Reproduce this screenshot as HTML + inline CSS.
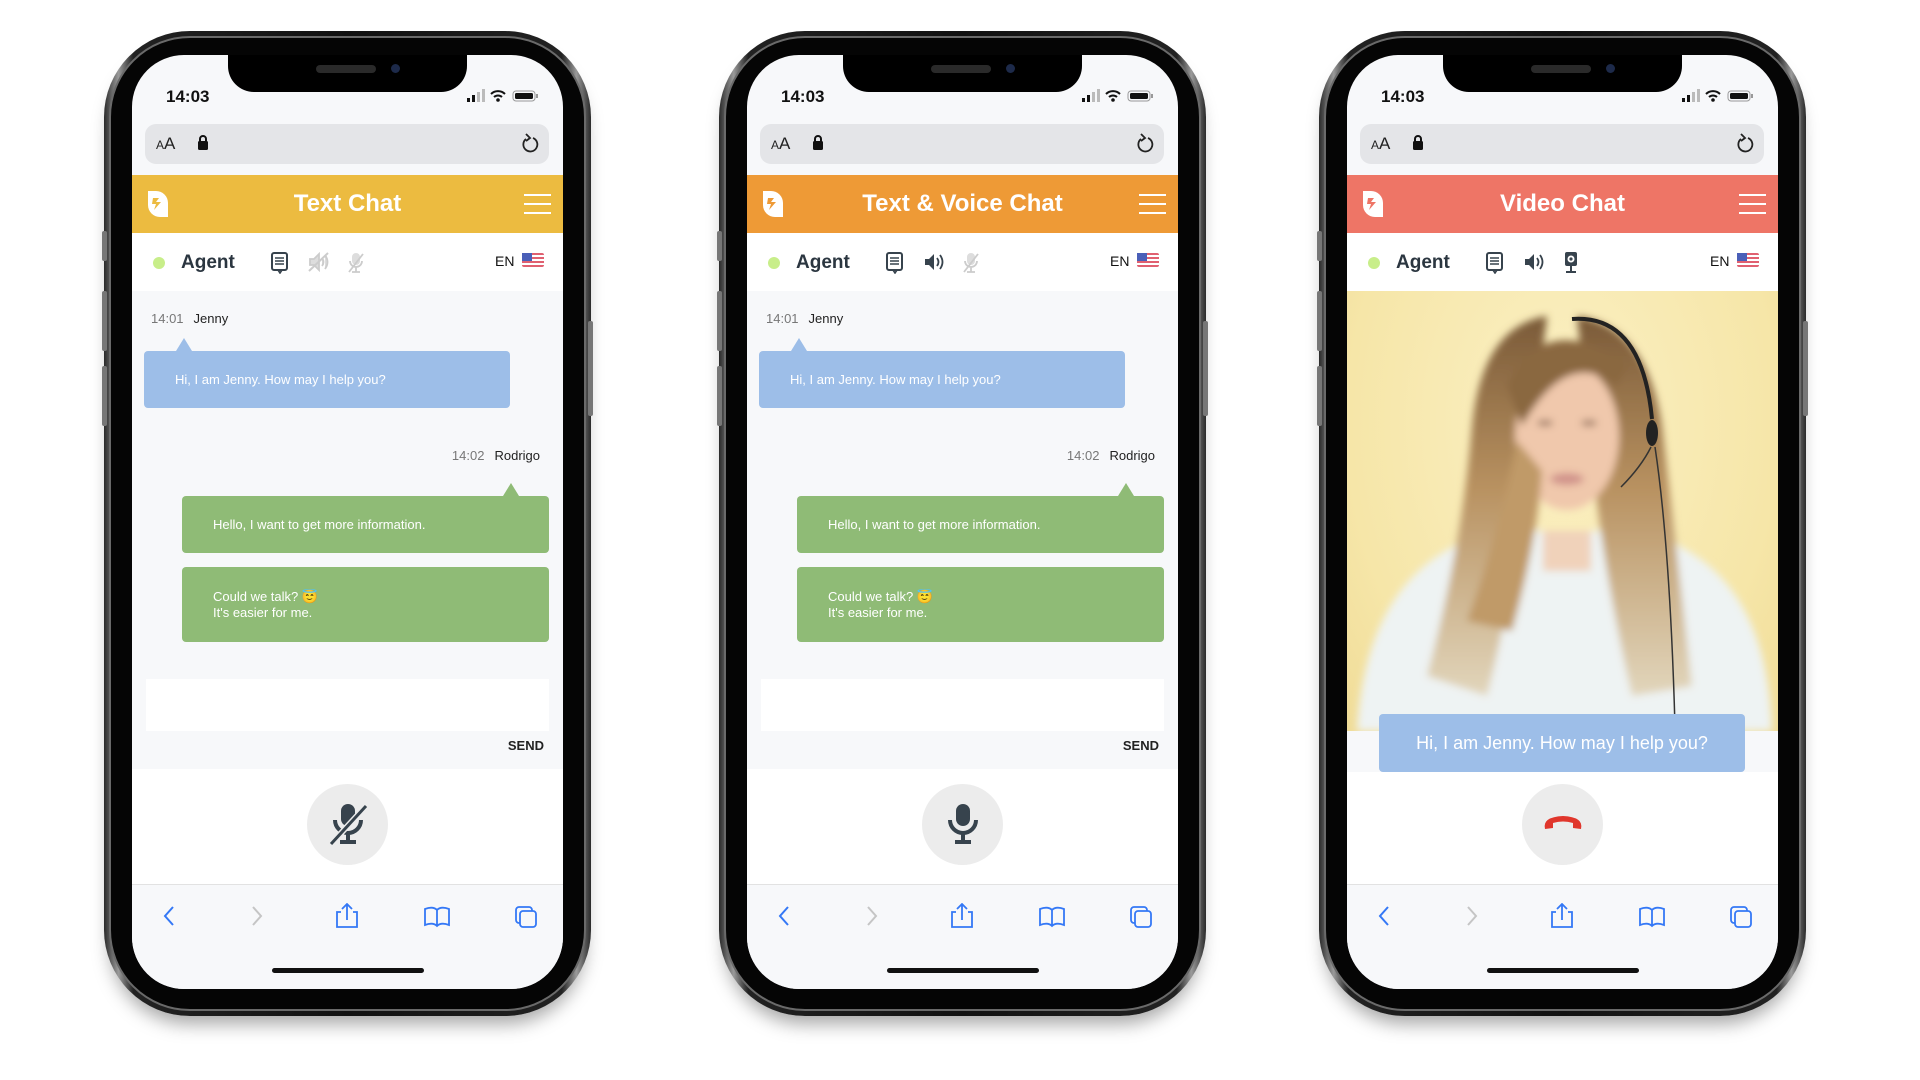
<!DOCTYPE html>
<html><head><meta charset="utf-8">
<style>
*{margin:0;padding:0;box-sizing:border-box}
body{width:1920px;height:1080px;background:#fff;position:relative;overflow:hidden;font-family:"Liberation Sans",Arial,sans-serif}
.phone{position:absolute;top:31px;width:487px;height:985px;border-radius:86px;background:linear-gradient(90deg,#2a2a2a,#9a9a9a 3%,#222 6%,#111 50%,#222 94%,#9a9a9a 97%,#2a2a2a);box-shadow:0 14px 18px -6px rgba(0,0,0,.35)}
.phone:before{content:"";position:absolute;left:5px;top:5px;right:5px;bottom:5px;border-radius:81px;background:#050505;border:2px solid #6a6a6a}
.btn{position:absolute;width:5px;background:#777;border-radius:2px}
.screen{position:absolute;left:28px;top:24px;width:431px;height:934px;border-radius:52px;overflow:hidden;background:#f7f8fa}
.notch{position:absolute;left:96px;top:-2px;width:239px;height:39px;background:#000;border-radius:0 0 26px 26px}
.notch i{position:absolute;left:88px;top:12px;width:60px;height:8px;border-radius:4px;background:#2a2a2a}
.notch b{position:absolute;left:163px;top:11px;width:9px;height:9px;border-radius:50%;background:#1d2a4a}
.time{position:absolute;left:34px;top:32px;font-size:17px;font-weight:bold;color:#111}
.stat{position:absolute;right:22px;top:34px}
.url{position:absolute;left:13px;top:69px;width:404px;height:40px;background:#e4e5e8;border-radius:11px}
.url .aa{position:absolute;left:11px;top:10px;font-size:17px;color:#222}
.url .aa small{font-size:12px}
.head{position:absolute;left:0;top:120px;width:431px;height:58px}
.head .t{position:absolute;left:0;right:0;top:15px;text-align:center;color:#fff;font-weight:bold;font-size:24px}
.ham{position:absolute;right:12px;top:19px;width:27px;height:20px;border-top:2px solid #fff;border-bottom:2px solid #fff}
.ham:after{content:"";position:absolute;left:0;right:0;top:7px;height:2px;background:#fff}
.agent{position:absolute;left:0;top:178px;width:431px;height:58px;background:#fff}
.dot{position:absolute;left:21px;top:24px;width:12px;height:12px;border-radius:50%;background:#c8ee8a}
.agent .n{position:absolute;left:49px;top:19px;font-size:19px;font-weight:bold;color:#2b3640}
.agent .en{position:absolute;left:363px;top:20px;font-size:14px;color:#111}
.flag{position:absolute;left:390px;top:20px;width:22px;height:14px;border-radius:2px;background:repeating-linear-gradient(#e06070 0 2px,#fff 2px 4px)}
.flag:before{content:"";position:absolute;left:0;top:0;width:10px;height:8px;background:#4a5fb8}
.ic{position:absolute;top:19px}
.meta{position:absolute;font-size:13px;color:#222}
.meta span{color:#777;margin-right:10px}
.bub{position:absolute;color:#fff;font-size:13px;border-radius:4px;padding:0 31px;display:flex;flex-direction:column;justify-content:center;line-height:16px}
.blue{background:#9dbee8}
.green{background:#8fbb76}
.tail{position:absolute;width:0;height:0;border-left:8px solid transparent;border-right:8px solid transparent}
.inp{position:absolute;left:14px;top:624px;width:403px;height:52px;background:#fff}
.send{position:absolute;right:19px;top:683px;font-size:13px;font-weight:bold;color:#222}
.low{position:absolute;left:0;top:714px;width:431px;height:115px;background:#fff}
.circ{position:absolute;left:175px;top:15px;width:81px;height:81px;border-radius:50%;background:#ececec}
.tool{position:absolute;left:0;top:829px;width:431px;height:105px;background:#f7f8fa;border-top:1px solid #e2e2e2}
.home{position:absolute;left:140px;top:83px;width:152px;height:5px;border-radius:3px;background:#111}
</style></head><body>

<div class="phone" style="left:104px">
<div class="btn" style="left:-2px;top:200px;height:30px"></div><div class="btn" style="left:-2px;top:260px;height:60px"></div><div class="btn" style="left:-2px;top:335px;height:60px"></div><div class="btn" style="right:-2px;top:290px;height:95px"></div>
<div class="screen">
<div class="time">14:03</div>
<svg class="stat" width="74" height="14" viewBox="0 0 74 14"><rect x="0" y="9" width="3" height="4" fill="#111"/><rect x="5" y="6" width="3" height="7" fill="#111"/><rect x="10" y="3" width="3" height="10" fill="#bbb"/><rect x="15" y="0" width="3" height="13" fill="#bbb"/><path d="M24 5a10 10 0 0 1 14 0M27 8a6 6 0 0 1 8 0" stroke="#111" stroke-width="2" fill="none"/><circle cx="31" cy="11" r="1.8" fill="#111"/><rect x="46" y="2" width="22" height="10" rx="3" fill="none" stroke="#999"/><rect x="48" y="4" width="18" height="6" rx="1.5" fill="#111"/><rect x="69" y="5" width="2" height="4" fill="#999"/></svg>
<div class="url"><div class="aa"><small>A</small>A</div>
<svg style="position:absolute;left:52px;top:11px" width="12" height="15"><rect x="1" y="6" width="10" height="9" rx="1.5" fill="#111"/><path d="M3 7V4a3 3 0 0 1 6 0v3" stroke="#111" stroke-width="2" fill="none"/></svg>
<svg style="position:absolute;right:10px;top:9px" width="20" height="22"><path d="M14 5a7 7 0 1 1-7 1" stroke="#222" stroke-width="1.8" fill="none"/><path d="M7 1l4 4-4 3" stroke="#222" stroke-width="1.8" fill="none"/></svg></div>
<div class="head" style="background:#ecbb40"><svg style="position:absolute;left:14px;top:14px" width="24" height="30" viewBox="0 0 24 30"><path d="M2 2h8a12 12 0 0 1 12 12v14h-8A12 12 0 0 1 2 16z" fill="#fff"/><path d="M7 9h6l-3 4h5l-7 8 2-6H6z" fill="#ecbb40"/></svg><div class="t">Text Chat</div><div class="ham"></div></div>
<div class="agent"><div class="dot"></div><div class="n">Agent</div>
<svg class="ic" style="left:139px" width="18" height="22"><rect x="1" y="1" width="15" height="17" rx="2" stroke="#37434d" stroke-width="2" fill="none"/><path d="M4 6h9M4 9h9M4 12h9M7 18l2 3 2-3" stroke="#37434d" stroke-width="1.6" fill="none"/></svg>
<svg class="ic" style="left:176px" width="22" height="20"><path d="M2 7h4l5-5v16l-5-5H2z M14 6q3 4 0 8M17 3q5 7 0 14" stroke="#ccc" stroke-width="1.8" fill="#ddd"/><path d="M1 19L20 1" stroke="#ccc" stroke-width="2"/></svg>
<svg class="ic" style="left:215px" width="18" height="22"><rect x="5" y="1" width="8" height="12" rx="4" fill="#ddd"/><path d="M3 9a6 6 0 0 0 12 0M9 15v5M5 20h8M2 20L16 2" stroke="#ccc" stroke-width="1.8" fill="none"/></svg>
<div class="en">EN</div><div class="flag"></div></div>
<div class="meta" style="left:19px;top:256px"><span>14:01</span>Jenny</div>
<div class="tail" style="left:44px;top:283px;border-bottom:13px solid #9dbee8"></div>
<div class="bub blue" style="left:12px;top:296px;width:366px;height:57px">Hi, I am Jenny. How may I help you?</div>
<div class="meta" style="right:23px;top:393px"><span>14:02</span>Rodrigo</div>
<div class="tail" style="left:371px;top:428px;border-bottom:13px solid #8fbb76"></div>
<div class="bub green" style="left:50px;top:441px;width:367px;height:57px">Hello, I want to get more information.</div>
<div class="bub green" style="left:50px;top:512px;width:367px;height:75px">Could we talk? 😇<br>It's easier for me.</div>
<div class="inp"></div><div class="send">SEND</div>
<div class="low"><div class="circ"><svg style="position:absolute;left:19px;top:16px" width="44" height="48"><rect x="15" y="4" width="14" height="22" rx="7" fill="#37434d"/><path d="M9 20a13 13 0 0 0 26 0M22 33v8M14 42h16" stroke="#37434d" stroke-width="4" fill="none"/><path d="M5 44L40 6" stroke="#ececec" stroke-width="6"/><path d="M5 44L40 6" stroke="#37434d" stroke-width="3"/></svg></div></div>
<div class="tool">
<svg style="position:absolute;left:24px;top:18px" width="400" height="28" viewBox="0 0 400 28"><path d="M17 4l-8 9 8 9" stroke="#3478f6" stroke-width="2" fill="none"/><path d="M97 4l8 9-8 9" stroke="#c5c5c5" stroke-width="2" fill="none"/><path d="M185 9h-4v15h20V9h-4M191 17V2M186 6l5-5 5 5" stroke="#3478f6" stroke-width="1.8" fill="none"/><path d="M269 6q8-3 12 1q4-4 12-1v16q-8-3-12 1q-4-4-12-1zM281 7v16" stroke="#3478f6" stroke-width="1.8" fill="none"/><rect x="360" y="4" width="16" height="16" rx="3" stroke="#3478f6" stroke-width="1.8" fill="none"/><rect x="364" y="8" width="16" height="16" rx="3" stroke="#3478f6" stroke-width="1.8" fill="#f7f8fa"/></svg>
<div class="home"></div></div>
<div class="notch"><i></i><b></b></div>
</div></div>

<div class="phone" style="left:719px">
<div class="btn" style="left:-2px;top:200px;height:30px"></div><div class="btn" style="left:-2px;top:260px;height:60px"></div><div class="btn" style="left:-2px;top:335px;height:60px"></div><div class="btn" style="right:-2px;top:290px;height:95px"></div>
<div class="screen">
<div class="time">14:03</div>
<svg class="stat" width="74" height="14" viewBox="0 0 74 14"><rect x="0" y="9" width="3" height="4" fill="#111"/><rect x="5" y="6" width="3" height="7" fill="#111"/><rect x="10" y="3" width="3" height="10" fill="#bbb"/><rect x="15" y="0" width="3" height="13" fill="#bbb"/><path d="M24 5a10 10 0 0 1 14 0M27 8a6 6 0 0 1 8 0" stroke="#111" stroke-width="2" fill="none"/><circle cx="31" cy="11" r="1.8" fill="#111"/><rect x="46" y="2" width="22" height="10" rx="3" fill="none" stroke="#999"/><rect x="48" y="4" width="18" height="6" rx="1.5" fill="#111"/><rect x="69" y="5" width="2" height="4" fill="#999"/></svg>
<div class="url"><div class="aa"><small>A</small>A</div>
<svg style="position:absolute;left:52px;top:11px" width="12" height="15"><rect x="1" y="6" width="10" height="9" rx="1.5" fill="#111"/><path d="M3 7V4a3 3 0 0 1 6 0v3" stroke="#111" stroke-width="2" fill="none"/></svg>
<svg style="position:absolute;right:10px;top:9px" width="20" height="22"><path d="M14 5a7 7 0 1 1-7 1" stroke="#222" stroke-width="1.8" fill="none"/><path d="M7 1l4 4-4 3" stroke="#222" stroke-width="1.8" fill="none"/></svg></div>
<div class="head" style="background:#ee9a36"><svg style="position:absolute;left:14px;top:14px" width="24" height="30" viewBox="0 0 24 30"><path d="M2 2h8a12 12 0 0 1 12 12v14h-8A12 12 0 0 1 2 16z" fill="#fff"/><path d="M7 9h6l-3 4h5l-7 8 2-6H6z" fill="#ee9a36"/></svg><div class="t">Text &amp; Voice Chat</div><div class="ham"></div></div>
<div class="agent"><div class="dot"></div><div class="n">Agent</div>
<svg class="ic" style="left:139px" width="18" height="22"><rect x="1" y="1" width="15" height="17" rx="2" stroke="#37434d" stroke-width="2" fill="none"/><path d="M4 6h9M4 9h9M4 12h9M7 18l2 3 2-3" stroke="#37434d" stroke-width="1.6" fill="none"/></svg>
<svg class="ic" style="left:176px" width="22" height="20"><path d="M2 7h4l5-5v16l-5-5H2z" fill="#37434d"/><path d="M14 6q3 4 0 8M17 3q5 7 0 14" stroke="#37434d" stroke-width="1.8" fill="none"/></svg>
<svg class="ic" style="left:215px" width="18" height="22"><rect x="5" y="1" width="8" height="12" rx="4" fill="#ddd"/><path d="M3 9a6 6 0 0 0 12 0M9 15v5M5 20h8M2 20L16 2" stroke="#ccc" stroke-width="1.8" fill="none"/></svg>
<div class="en">EN</div><div class="flag"></div></div>
<div class="meta" style="left:19px;top:256px"><span>14:01</span>Jenny</div>
<div class="tail" style="left:44px;top:283px;border-bottom:13px solid #9dbee8"></div>
<div class="bub blue" style="left:12px;top:296px;width:366px;height:57px">Hi, I am Jenny. How may I help you?</div>
<div class="meta" style="right:23px;top:393px"><span>14:02</span>Rodrigo</div>
<div class="tail" style="left:371px;top:428px;border-bottom:13px solid #8fbb76"></div>
<div class="bub green" style="left:50px;top:441px;width:367px;height:57px">Hello, I want to get more information.</div>
<div class="bub green" style="left:50px;top:512px;width:367px;height:75px">Could we talk? 😇<br>It's easier for me.</div>
<div class="inp"></div><div class="send">SEND</div>
<div class="low"><div class="circ"><svg style="position:absolute;left:19px;top:16px" width="44" height="48"><rect x="15" y="4" width="14" height="22" rx="7" fill="#37434d"/><path d="M9 20a13 13 0 0 0 26 0M22 33v8M14 42h16" stroke="#37434d" stroke-width="4" fill="none"/></svg></div></div>
<div class="tool">
<svg style="position:absolute;left:24px;top:18px" width="400" height="28" viewBox="0 0 400 28"><path d="M17 4l-8 9 8 9" stroke="#3478f6" stroke-width="2" fill="none"/><path d="M97 4l8 9-8 9" stroke="#c5c5c5" stroke-width="2" fill="none"/><path d="M185 9h-4v15h20V9h-4M191 17V2M186 6l5-5 5 5" stroke="#3478f6" stroke-width="1.8" fill="none"/><path d="M269 6q8-3 12 1q4-4 12-1v16q-8-3-12 1q-4-4-12-1zM281 7v16" stroke="#3478f6" stroke-width="1.8" fill="none"/><rect x="360" y="4" width="16" height="16" rx="3" stroke="#3478f6" stroke-width="1.8" fill="none"/><rect x="364" y="8" width="16" height="16" rx="3" stroke="#3478f6" stroke-width="1.8" fill="#f7f8fa"/></svg>
<div class="home"></div></div>
<div class="notch"><i></i><b></b></div>
</div></div>

<div class="phone" style="left:1319px">
<div class="btn" style="left:-2px;top:200px;height:30px"></div><div class="btn" style="left:-2px;top:260px;height:60px"></div><div class="btn" style="left:-2px;top:335px;height:60px"></div><div class="btn" style="right:-2px;top:290px;height:95px"></div>
<div class="screen">
<div class="time">14:03</div>
<svg class="stat" width="74" height="14" viewBox="0 0 74 14"><rect x="0" y="9" width="3" height="4" fill="#111"/><rect x="5" y="6" width="3" height="7" fill="#111"/><rect x="10" y="3" width="3" height="10" fill="#bbb"/><rect x="15" y="0" width="3" height="13" fill="#bbb"/><path d="M24 5a10 10 0 0 1 14 0M27 8a6 6 0 0 1 8 0" stroke="#111" stroke-width="2" fill="none"/><circle cx="31" cy="11" r="1.8" fill="#111"/><rect x="46" y="2" width="22" height="10" rx="3" fill="none" stroke="#999"/><rect x="48" y="4" width="18" height="6" rx="1.5" fill="#111"/><rect x="69" y="5" width="2" height="4" fill="#999"/></svg>
<div class="url"><div class="aa"><small>A</small>A</div>
<svg style="position:absolute;left:52px;top:11px" width="12" height="15"><rect x="1" y="6" width="10" height="9" rx="1.5" fill="#111"/><path d="M3 7V4a3 3 0 0 1 6 0v3" stroke="#111" stroke-width="2" fill="none"/></svg>
<svg style="position:absolute;right:10px;top:9px" width="20" height="22"><path d="M14 5a7 7 0 1 1-7 1" stroke="#222" stroke-width="1.8" fill="none"/><path d="M7 1l4 4-4 3" stroke="#222" stroke-width="1.8" fill="none"/></svg></div>
<div class="head" style="background:#ee7566"><svg style="position:absolute;left:14px;top:14px" width="24" height="30" viewBox="0 0 24 30"><path d="M2 2h8a12 12 0 0 1 12 12v14h-8A12 12 0 0 1 2 16z" fill="#fff"/><path d="M7 9h6l-3 4h5l-7 8 2-6H6z" fill="#ee7566"/></svg><div class="t">Video Chat</div><div class="ham"></div></div>
<div class="agent"><div class="dot"></div><div class="n">Agent</div>
<svg class="ic" style="left:139px" width="18" height="22"><rect x="1" y="1" width="15" height="17" rx="2" stroke="#37434d" stroke-width="2" fill="none"/><path d="M4 6h9M4 9h9M4 12h9M7 18l2 3 2-3" stroke="#37434d" stroke-width="1.6" fill="none"/></svg>
<svg class="ic" style="left:176px" width="22" height="20"><path d="M2 7h4l5-5v16l-5-5H2z" fill="#37434d"/><path d="M14 6q3 4 0 8M17 3q5 7 0 14" stroke="#37434d" stroke-width="1.8" fill="none"/></svg>
<svg class="ic" style="left:215px" width="18" height="22"><rect x="3" y="0" width="12" height="14" rx="2" fill="#37434d"/><circle cx="9" cy="7" r="3.5" fill="#fff"/><circle cx="9" cy="7" r="1.6" fill="#37434d"/><path d="M9 14v5M4 20h10" stroke="#37434d" stroke-width="2"/></svg>
<div class="en">EN</div><div class="flag"></div></div>
<div style="position:absolute;left:0;top:236px;width:431px;height:440px;overflow:hidden;background:radial-gradient(ellipse at 50% 30%,#fbf0c4,#f6e6a8 70%,#f0dc98)">
<svg width="431" height="440" viewBox="0 0 431 440">
<defs><linearGradient id="hr" x1="0" y1="0" x2="0" y2="1"><stop offset="0" stop-color="#7a5a38"/><stop offset=".45" stop-color="#b89160"/><stop offset="1" stop-color="#e2d6bc"/></linearGradient>
<filter id="bl"><feGaussianBlur stdDeviation="4"/></filter></defs>
<g filter="url(#bl)">
<path d="M10 440q10-170 140-200h140q130 30 135 200z" fill="#eef3f3"/>
<path d="M200 25q-65 10-75 110q-10 120 -45 250l60 20q30-120 40-220zM230 25q70 10 85 110q15 130 30 260l-60 10q-30-130-40-240z" fill="url(#hr)"/>
<ellipse cx="220" cy="145" rx="52" ry="74" fill="#f0c8ac"/>
<path d="M160 95q40-80 120-20l-10 20q-50-40-95 40z" fill="#8a6840"/>
<path d="M170 150q-20 100-50 180l45 10q25-90 30-160z" fill="#c09a68"/>
<ellipse cx="220" cy="188" rx="17" ry="6" fill="#d0928a"/>
<ellipse cx="198" cy="132" rx="8" ry="3" fill="#9a7660"/><ellipse cx="242" cy="132" rx="8" ry="3" fill="#9a7660"/>
<rect x="196" y="240" width="48" height="40" fill="#f0d2ba"/>
</g>
<path d="M225 28q70-5 80 100" stroke="#222" stroke-width="4" fill="none"/>
<ellipse cx="305" cy="142" rx="6" ry="13" fill="#222"/>
<path d="M304 156q-10 20-30 40M308 156q15 100 20 280" stroke="#333" stroke-width="1.5" fill="none"/>
</svg></div>
<div class="bub blue" style="left:32px;top:659px;width:366px;height:58px;align-items:center;padding:0;font-size:18px">Hi, I am Jenny. How may I help you?</div>
<div style="position:absolute;left:0;top:717px;width:431px;height:112px;background:#fff"><div class="circ" style="top:12px"><svg style="position:absolute;left:20px;top:28px" width="42" height="22"><path d="M3 17q-3-12 18-13q21 1 18 13l-8-1v-5q-10-3-20 0v5z" fill="#e0362c"/></svg></div></div>
<div class="tool">
<svg style="position:absolute;left:24px;top:18px" width="400" height="28" viewBox="0 0 400 28"><path d="M17 4l-8 9 8 9" stroke="#3478f6" stroke-width="2" fill="none"/><path d="M97 4l8 9-8 9" stroke="#c5c5c5" stroke-width="2" fill="none"/><path d="M185 9h-4v15h20V9h-4M191 17V2M186 6l5-5 5 5" stroke="#3478f6" stroke-width="1.8" fill="none"/><path d="M269 6q8-3 12 1q4-4 12-1v16q-8-3-12 1q-4-4-12-1zM281 7v16" stroke="#3478f6" stroke-width="1.8" fill="none"/><rect x="360" y="4" width="16" height="16" rx="3" stroke="#3478f6" stroke-width="1.8" fill="none"/><rect x="364" y="8" width="16" height="16" rx="3" stroke="#3478f6" stroke-width="1.8" fill="#f7f8fa"/></svg>
<div class="home"></div></div>
<div class="notch"><i></i><b></b></div>
</div></div>
</body></html>
